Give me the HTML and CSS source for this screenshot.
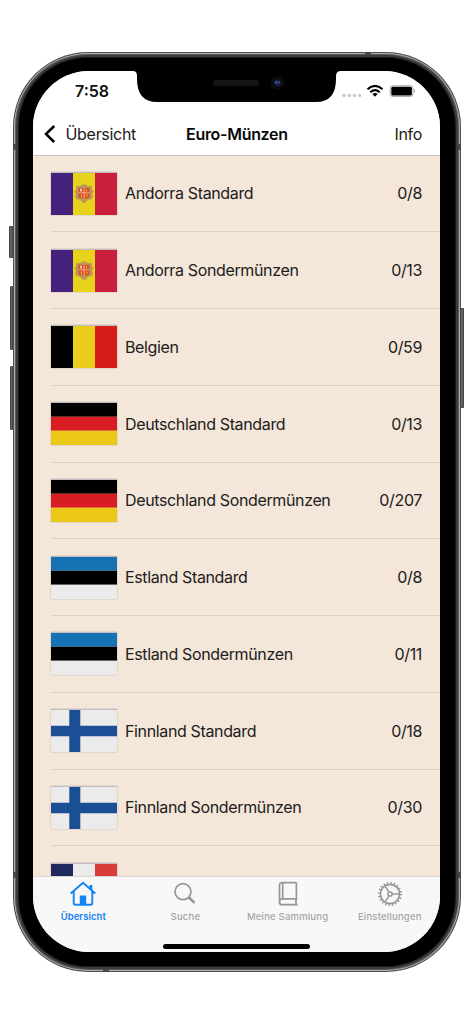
FILE: index.html
```html
<!DOCTYPE html>
<html lang="de">
<head>
<meta charset="utf-8">
<title>Euro-Münzen</title>
<link rel="stylesheet" href="styles.css">
</head>
<body>
<svg width="0" height="0" class="defs">
  <symbol id="andorra" viewBox="0 0 66 43" preserveAspectRatio="none">
    <path fill="#44217b" d="M0 0h22v43H0z"/><path fill="#e8d21b" d="M22 0h22v43H22z"/><path fill="#cb1e3c" d="M44 0h22v43H44z"/>
    <path fill="#b99b57" d="M25.500 13l3.500.5 2-1.800h4l2 1.800 3.500-.5.500 4 1.500 2-1.500 2 1 3-1.500 3-3.500.5-2 2.500-2 1-2-1-2-2.500-3.500-.5-1.500-3 1-3-1.500-2 1.500-2z"/>
    <path fill="#dc4f2b" d="M27.500 15h11v9q0 2-3 2h-5q-3 0-3-2z"/>
    <path fill="#f4c8a0" d="M29 16h2v3h-2zM32.700 15h.8v11h-.8zM27.500 20h11v.8h-11z"/><path fill="#e8c536" d="M35 17h1v2h-1zM30 22h1v3h-1zM35.500 22h1v2h-1z"/>
  </symbol>
  <symbol id="belgien" viewBox="0 0 66 43" preserveAspectRatio="none"><path d="M0 0h22v43H0z"/><path fill="#e9cf1b" d="M22 0h22v43H22z"/><path fill="#d61d18" d="M44 0h22v43H44z"/></symbol>
  <symbol id="deutschland" viewBox="0 0 66 43" preserveAspectRatio="none"><path d="M0 0h66v14H0z"/><path fill="#d91e23" d="M0 14h66v14.500H0z"/><path fill="#ecc916" d="M0 28.500h66V43H0z"/></symbol>
  <symbol id="estland" viewBox="0 0 66 43" preserveAspectRatio="none"><path fill="#1672b3" d="M0 0h66v14H0z"/><path d="M0 14h66v14.500H0z"/><path fill="#ebebeb" d="M0 28.500h66V43H0z"/></symbol>
  <symbol id="finnland" viewBox="0 0 66 43" preserveAspectRatio="none"><path fill="#ebebeb" d="M0 0h66v43H0z"/><path fill="#1c4e95" d="M18.300 0h11v43h-11zM0 16h66v11H0z"/></symbol>
  <symbol id="frankreich" viewBox="0 0 66 43" preserveAspectRatio="none"><path fill="#20295d" d="M0 0h22v43H0z"/><path fill="#ebebeb" d="M22 0h22v43H22z"/><path fill="#d93c38" d="M44 0h22v43H44z"/></symbol>
</svg>
<div class="phone">
  <i class="key mute"></i><i class="key up"></i><i class="key down"></i><i class="key power"></i>
  <div class="bezel">
    <div class="screen">
      <div class="status">
        <span class="time">7:58</span>
        <svg width="74" height="14" viewBox="0 0 74 14">
          <g fill="#c9c9c9"><circle cx="3" cy="10.500" r="1.700"/><circle cx="8.200" cy="10.500" r="1.700"/><circle cx="13.400" cy="10.500" r="1.700"/><circle cx="18.600" cy="10.500" r="1.700"/></g>
          <g fill="none" stroke="#000" stroke-width="2.100"><path d="M26.500 4.200Q34-2.200 41.500 4.200"/><path d="M29.300 7.200Q34 3 38.700 7.200"/></g><path d="M31.300 9Q34 7 36.700 9L34 11.800z"/>
          <rect x="49.200" y=".7" width="22.800" height="10.800" rx="2.800" fill="none" stroke="#aaa"/><rect x="50.300" y="1.800" width="20.600" height="8.600" rx="1.500"/><path fill="#999" d="M73 4.500q1 .3 1 1.500t-1 1.500z"/>
        </svg>
      </div>
      <header class="nav">
        <a class="back"><svg width="12" height="20" viewBox="0 0 12 20"><path d="M10.200 2L2 10l8.200 8" fill="none" stroke="#000" stroke-width="2.500"/></svg><span>Übersicht</span></a>
        <h1>Euro-Münzen</h1>
        <a class="info">Info</a>
      </header>
      <main class="list">
        <div class="row"><svg class="flag"><use href="#andorra"/></svg><span class="name">Andorra Standard</span><span>0/8</span></div>
        <div class="row"><svg class="flag"><use href="#andorra"/></svg><span class="name">Andorra Sondermünzen</span><span>0/13</span></div>
        <div class="row"><svg class="flag"><use href="#belgien"/></svg><span class="name">Belgien</span><span>0/59</span></div>
        <div class="row"><svg class="flag"><use href="#deutschland"/></svg><span class="name">Deutschland Standard</span><span>0/13</span></div>
        <div class="row"><svg class="flag"><use href="#deutschland"/></svg><span class="name">Deutschland Sondermünzen</span><span>0/207</span></div>
        <div class="row"><svg class="flag"><use href="#estland"/></svg><span class="name">Estland Standard</span><span>0/8</span></div>
        <div class="row"><svg class="flag"><use href="#estland"/></svg><span class="name">Estland Sondermünzen</span><span>0/11</span></div>
        <div class="row"><svg class="flag"><use href="#finnland"/></svg><span class="name">Finnland Standard</span><span>0/18</span></div>
        <div class="row"><svg class="flag"><use href="#finnland"/></svg><span class="name">Finnland Sondermünzen</span><span>0/30</span></div>
        <div class="row"><svg class="flag"><use href="#frankreich"/></svg></div>
      </main>
      <footer class="bottom">
        <nav class="tabs">
          <a class="tab active"><svg width="28" height="26" viewBox="0 0 28 26"><path d="M1.700 12.500L14 1.700l12.300 10.800M4.700 10.500V22q0 1.700 1.700 1.700h15.200q1.700 0 1.700-1.700V10.500" fill="none" stroke="currentColor" stroke-width="1.900"/><path d="M10.800 14.500h6.400v9h-6.400zM20.500 4h2.800v6l-2.800-2z" fill="currentColor"/></svg><span>Übersicht</span></a>
          <a class="tab"><svg width="28" height="26" viewBox="0 0 28 26"><circle cx="12" cy="10.700" r="8" fill="none" stroke="currentColor" stroke-width="1.700"/><path d="M17.500 16l6 5.800" stroke="currentColor" stroke-width="2.500"/></svg><span>Suche</span></a>
          <a class="tab"><svg width="28" height="26" viewBox="0 0 28 26"><path d="M7.800 1.700h14q.6 0 .6.700v15.500H8q-2.500 0-2.500 3 0 2.800 2.500 2.800h14.600q-1.600-2.600-.2-5.500M5.500 21V4q0-2.300 2.500-2.300M8.700 2v15.800" fill="none" stroke="currentColor" stroke-width="1.700"/></svg><span>Meine Sammlung</span></a>
          <a class="tab"><svg width="28" height="26" viewBox="0 0 28 26" fill="none" stroke="currentColor"><circle cx="14" cy="13" r="9.600" stroke-width="1.700"/><circle cx="14" cy="13" r="11.200" stroke-width="1.800" stroke-dasharray="1.400 2.119"/><circle cx="14" cy="13" r="2.100" stroke-width="1.500"/><path d="M16 13h7.500M13 11.200L9 4.800M13 14.800L9 21.200" stroke-width="1.500"/></svg><span>Einstellungen</span></a>
        </nav>
        <div class="home"></div>
      </footer>
    </div>
    <svg class="notch" width="208" height="34" viewBox="0 0 208 34"><path d="M0 0h208v2q-5 0-5 5v3q0 23-20 23H24Q4 33 4 10V7Q4 2 0 2z"/><rect x="80" y="11" width="46" height="6" rx="3" fill="#151515"/><circle cx="144.500" cy="14" r="7" fill="#0b0b0e"/><circle cx="144.500" cy="14" r="3.300" fill="#18203f"/><circle cx="143.200" cy="13.300" r="1.300" fill="#3553a8"/><circle cx="146.500" cy="13.500" r=".9" fill="#4259a8"/></svg>
  </div>
  <i class="band b1"></i><i class="band b2"></i><i class="band b3"></i><i class="band b4"></i><i class="band b5"></i><i class="band b6"></i>
</div>
</body>
</html>
```
FILE: styles.css
```css
* { box-sizing: border-box; }
body { margin: 0; height: 1024px; padding: 52px 12px 0 13px; background: #fff; font-family: Inter, "Liberation Sans", sans-serif; color: #202020; overflow: hidden; }
.defs { position: absolute; }
.phone { position: relative; width: 448px; height: 920px; padding: 1px; border-radius: 75px; background: #50534f; }
.bezel { position: relative; height: 918px; border-radius: 74px; padding: 18px 20px 18px 19px; background: #000; box-shadow: inset 0 0 0 1px #aaaca8, inset 0 0 0 2px #5b5e59, inset 0 0 0 4px #393c37, inset 0 0 0 5px #171916; }
.screen { height: 881px; border-radius: 56px; overflow: hidden; display: flex; flex-direction: column; background: #f4e6d9; }
.status { height: 42px; flex: none; background: #fff; padding: 10px 25px 0 42px; display: flex; justify-content: space-between; align-items: flex-start; }
.status svg { margin-top: 4px; }
.time { font-size: 16px; line-height: 20px; font-weight: 600; color: #111; }
.nav { height: 42.500px; flex: none; background: #fff; border-bottom: 1px solid #c9c7c5; display: grid; grid-template-columns: 1fr auto 1fr; align-items: center; padding: 0 18px 0 11px; font-size: 16px; line-height: 20px; letter-spacing: -.3px; }
.nav h1 { margin: 0 0 0 1px; font-size: 16px; font-weight: 600; color: #080808; }
.nav { grid-template-columns: 141px auto 1fr; }
.back { display: flex; align-items: center; gap: 9.500px; }
.info { justify-self: end; }
.list { flex: 1; min-height: 0; overflow: hidden; }
.row { height: 76.750px; margin-left: 18px; padding-right: 18px; display: flex; align-items: center; gap: 8px; border-bottom: 1px solid #ddd0c5; font-size: 16px; line-height: 20px; letter-spacing: -.36px; }
.name { flex: 1; white-space: nowrap; }
.flag { width: 66px; height: 43px; flex: none; box-shadow: 0 0 1px #8e8880; overflow: hidden; border-top: 1px solid rgba(170,170,180,.7); }
.bottom { height: 76px; flex: none; background: #f8f8f8; border-top: 1px solid #ddd8d4; display: flex; flex-direction: column; justify-content: space-between; align-items: center; padding-bottom: 3.500px; }
.tabs { width: 100%; display: grid; grid-template-columns: repeat(4, 102.200px); justify-content: center; padding-top: 4px; }
.tab { display: flex; flex-direction: column; align-items: center; color: #969696; }
.tab span { font-size: 9.500px; line-height: 12px; margin-top: 4px; font-weight: 500; letter-spacing: .2px; white-space: nowrap; color: #a5a5a5; }
.tab.active, .tab.active span { color: #1583f2; }
.tab.active span { font-weight: 600; letter-spacing: .05px; }
.home { width: 147px; height: 5px; border-radius: 3px; background: #000; }
.notch { position: absolute; left: 119px; top: 16px; }
.key { position: absolute; left: -3px; width: 3px; background: #60635f; border: 1px solid #454844; border-radius: 1px 0 0 1px; }
.mute { top: 174px; height: 32px; left: -4px; width: 4px; }
.up { top: 234px; height: 64px; }
.down { top: 314px; height: 64px; }
.power { left: 447px; width: 4px; top: 256px; height: 100px; }
.band { position: absolute; background: #454743; }
.b1 { left: 352px; top: 0; width: 6px; height: 3px; }
.b2 { left: 0; top: 92px; width: 3px; height: 6px; }
.b3 { right: 0; top: 92px; width: 3px; height: 6px; }
.b4 { left: 0; bottom: 94px; width: 3px; height: 6px; }
.b5 { right: 0; bottom: 94px; width: 3px; height: 6px; }
.b6 { left: 90px; bottom: 0; width: 6px; height: 3px; }
```
